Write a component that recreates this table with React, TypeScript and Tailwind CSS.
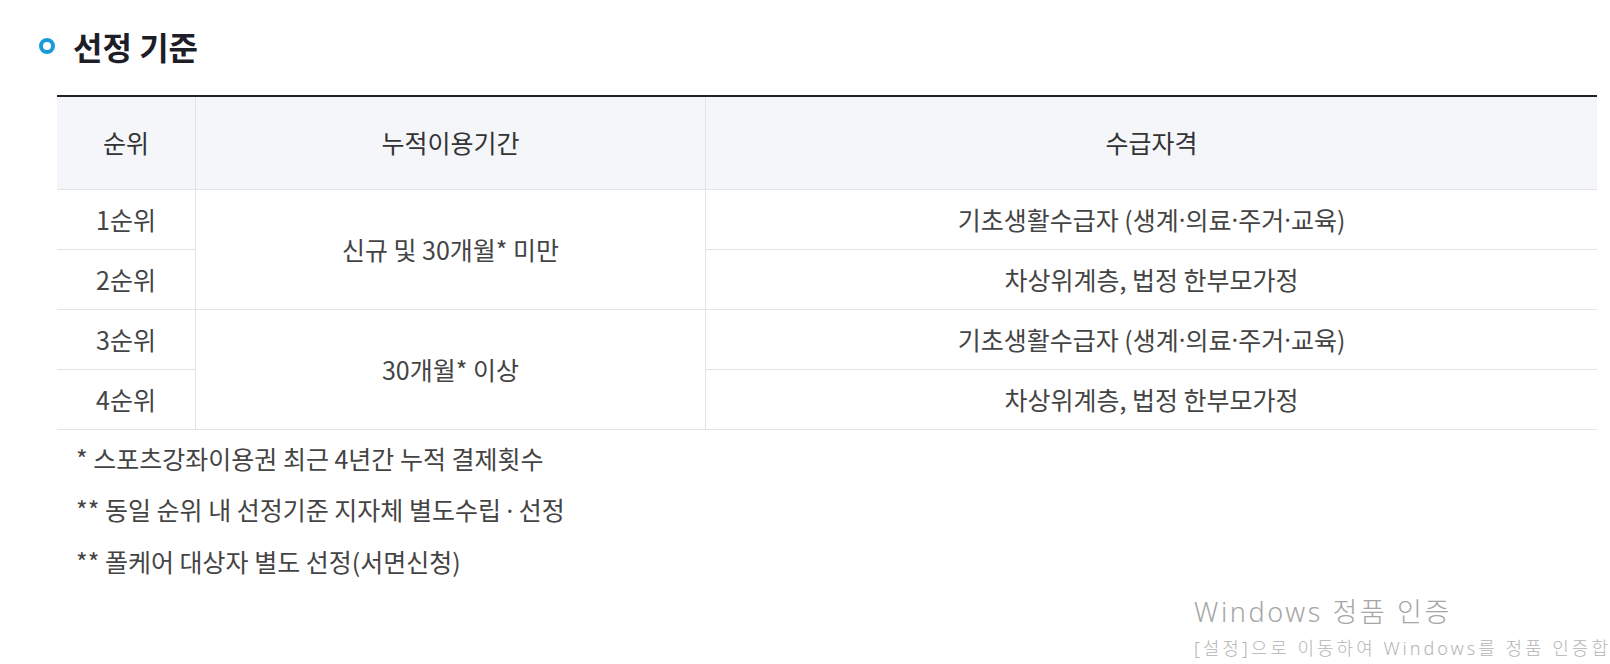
import React from 'react';

const Dot = () => <span className="font-['Noto_Sans',sans-serif]">·</span>;

const Eligible = () => (
  <>
    기초생활수급자 (생계<Dot />의료<Dot />주거<Dot />교육)
  </>
);

const rows = [
  { rank: '1순위', right: <Eligible /> },
  { rank: '2순위', right: '차상위계층, 법정 한부모가정' },
  { rank: '3순위', right: <Eligible /> },
  { rank: '4순위', right: '차상위계층, 법정 한부모가정' },
];

const App: React.FC = () => {
  return (
    <div className="relative w-[1610px] h-[664px] bg-white overflow-hidden font-['Noto_Sans_CJK_KR',sans-serif] text-[#333]">
      <div className="pl-[39px] pt-[27px] flex items-center h-[64px]">
        <span className="w-[16px] h-[16px] rounded-full border-[4px] border-[#1a9bd7]" />
        <h2 className="ml-[18px] text-[32px] leading-[38px] font-bold text-[#1e1e28]">선정 기준</h2>
      </div>

      <div className="ml-[57px] mt-[31px] w-[1540px] border-t-2 border-b border-t-[#222] border-b-[#e1e3e6]">
        <div className="grid grid-cols-[138px_509px_891px] grid-rows-[92px_59px_59px_59px_59px] gap-px bg-[#e1e3e6] text-[25px] text-[#444]">
          <div className="bg-[#f4f6f9] flex items-center justify-center text-[#333]">순위</div>
          <div className="bg-[#f4f6f9] flex items-center justify-center text-[#333]">누적이용기간</div>
          <div className="bg-[#f4f6f9] flex items-center justify-center text-[#333]">수급자격</div>

          <div className="bg-white flex items-center justify-center">{rows[0].rank}</div>
          <div className="bg-white row-span-2 flex items-center justify-center">신규 및 30개월* 미만</div>
          <div className="bg-white flex items-center justify-center">{rows[0].right}</div>

          <div className="bg-white flex items-center justify-center">{rows[1].rank}</div>
          <div className="bg-white flex items-center justify-center">{rows[1].right}</div>

          <div className="bg-white flex items-center justify-center">{rows[2].rank}</div>
          <div className="bg-white row-span-2 flex items-center justify-center">30개월* 이상</div>
          <div className="bg-white flex items-center justify-center">{rows[2].right}</div>

          <div className="bg-white flex items-center justify-center">{rows[3].rank}</div>
          <div className="bg-white flex items-center justify-center">{rows[3].right}</div>
        </div>
      </div>

      <ul className="ml-[76px] mt-[3px] text-[25px] leading-[51px] text-[#444]">
        <li>* 스포츠강좌이용권 최근 4년간 누적 결제횟수</li>
        <li>** 동일 순위 내 선정기준 지자체 별도수립 <Dot /> 선정</li>
        <li>** 폴케어 대상자 별도 선정(서면신청)</li>
      </ul>

      <div className="absolute left-[1194px] top-[595px] whitespace-nowrap font-['Noto_Sans','Noto_Sans_CJK_KR',sans-serif] text-[#a6a6a6]">
        <div className="text-[27px] leading-[34px] font-light tracking-[2.6px]">Windows 정품 인증</div>
        <div className="mt-[8px] text-[18px] leading-[22px] font-light tracking-[3px] text-[#b4b4b4]">[설정]으로 이동하여 Windows를 정품 인증합니다.</div>
      </div>
    </div>
  );
};

export default App;
